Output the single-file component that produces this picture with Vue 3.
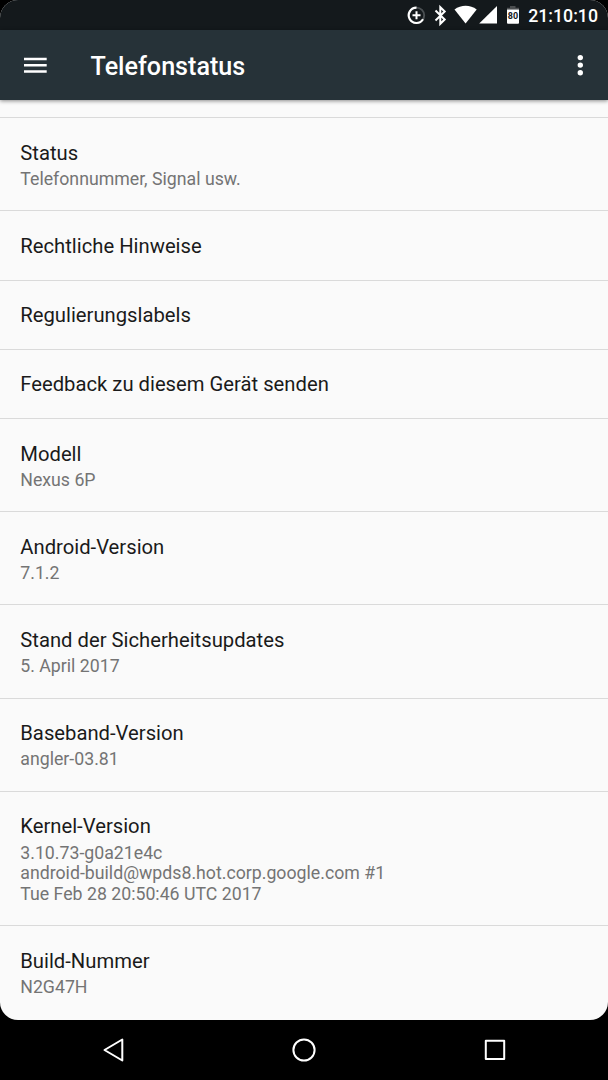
<script setup>
const rows = [
  { title: 'Status', lines: ['Telefonnummer, Signal usw.'] },
  { title: 'Rechtliche Hinweise', lines: [] },
  { title: 'Regulierungslabels', lines: [] },
  { title: 'Feedback zu diesem Gerät senden', lines: [] },
  { title: 'Modell', lines: ['Nexus 6P'] },
  { title: 'Android-Version', lines: ['7.1.2'] },
  { title: 'Stand der Sicherheitsupdates', lines: ['5. April 2017'] },
  { title: 'Baseband-Version', lines: ['angler-03.81'] },
  {
    title: 'Kernel-Version',
    lines: ['3.10.73-g0a21e4c', 'android-build@wpds8.hot.corp.google.com #1', 'Tue Feb 28 20:50:46 UTC 2017'],
  },
  { title: 'Build-Nummer', lines: ['N2G47H'] },
]
</script>

<template>
  <div class="phone">
    <div class="screen">
      <div class="statusbar">
        <svg class="status-icons" width="122" height="30" viewBox="0 0 122 30">
          <g fill="none">
            <circle cx="16.5" cy="15.3" r="7.7" stroke="#4b5053" stroke-width="1.9" />
            <path d="M16.5 7.6A7.7 7.7 0 1 0 23 19.3" stroke="#fff" stroke-width="2.2" />
            <path d="M16.5 11.3v8M12.5 15.3h8" stroke="#fff" stroke-width="2" />
            <path d="M35.5 10.5l9.2 9-4.4 4.3V7.2l4.4 4.3-9.2 9" stroke="#fff" stroke-width="2" />
          </g>
          <path d="M54.5 9.4C61 4.6 70.2 4.6 76.7 9.4L65.6 23.6z" fill="#fff" />
          <path d="M97 6v17.6H79.2z" fill="#fff" />
          <path d="M107 9.5V7.7h3V6h5.5v1.7h3.5v1.8z" fill="#4b4e50" />
          <path d="M107 9.5h12v13.2a1 1 0 0 1-1 1h-10a1 1 0 0 1-1-1z" fill="#fff" />
          <text class="battery-level" x="113" y="18.5" text-anchor="middle">80</text>
        </svg>
        <span class="clock">21:10:10</span>
      </div>
      <header class="appbar">
        <svg class="menu" width="24" height="18" viewBox="0 0 24 18">
          <path d="M0 3h22.7M0 9.2h22.7M0 15.5h22.7" stroke="#fff" stroke-width="2.4" />
        </svg>
        <h1>Telefonstatus</h1>
        <svg class="more" width="8" height="22" viewBox="0 0 8 22" fill="#fff">
          <circle cx="4.3" cy="3.6" r="2.7" />
          <circle cx="4.3" cy="11.1" r="2.7" />
          <circle cx="4.3" cy="18.7" r="2.7" />
        </svg>
      </header>
      <main class="list">
        <section v-for="row in rows" :key="row.title" class="row">
          <div class="title">{{ row.title }}</div>
          <div v-if="row.lines.length" class="summary">
            <div v-for="line in row.lines" :key="line" class="line">{{ line }}</div>
          </div>
        </section>
      </main>
    </div>
    <nav class="navbar">
      <svg width="608" height="61" viewBox="0 0 608 61" fill="none" stroke="#fff" stroke-width="2" stroke-linejoin="round">
        <path d="M122.3 19.5v21L104.5 30z" />
        <circle cx="304" cy="30" r="10.6" />
        <rect x="485.8" y="20.7" width="18.4" height="18.4" />
      </svg>
    </nav>
  </div>
</template>

<style scoped>
.phone {
  width: 608px;
  height: 1080px;
  background: #000;
  overflow: hidden;
  font-family: Roboto, "Noto Sans", sans-serif;
}
.screen {
  height: 1019.5px;
  display: flex;
  flex-direction: column;
  overflow: hidden;
  border-radius: 18px;
  background: #fafafa;
}
.statusbar {
  flex: none;
  height: 30px;
  background: #14191c;
  display: flex;
  justify-content: flex-end;
  padding-right: 10px;
}
.status-icons {
  margin-right: 6px;
}
.battery-level {
  font: bold 9px Roboto, sans-serif;
  fill: #14191c;
}
.clock {
  font-size: 17.73px;
  font-weight: 500;
  line-height: 32px;
  color: #fff;
}
.appbar {
  flex: none;
  height: 70px;
  background: #263238;
  display: flex;
  align-items: center;
  padding: 0 24px;
  box-shadow: 0 1px 4px rgba(0, 0, 0, 0.45);
  z-index: 1;
}
h1 {
  margin: 3px 0 0 42.5px;
  flex: 1;
  font-size: 25.15px;
  font-weight: 500;
  line-height: 32px;
  color: #fff;
}
.list {
  padding-top: 17.1px;
}
.row {
  box-sizing: border-box;
  min-height: 69.2px;
  border-top: 1px solid #dadada;
  padding: 20.7px 20.27px 0;
}
.title {
  font-size: 20.24px;
  line-height: 29px;
  color: #1a1a1a;
}
.summary {
  padding: 1.2px 0 20.7px;
}
.line {
  font-size: 17.73px;
  line-height: 20.65px;
  color: #747474;
  white-space: nowrap;
}
.navbar {
  height: 60.5px;
}
.navbar svg {
  display: block;
}
</style>
